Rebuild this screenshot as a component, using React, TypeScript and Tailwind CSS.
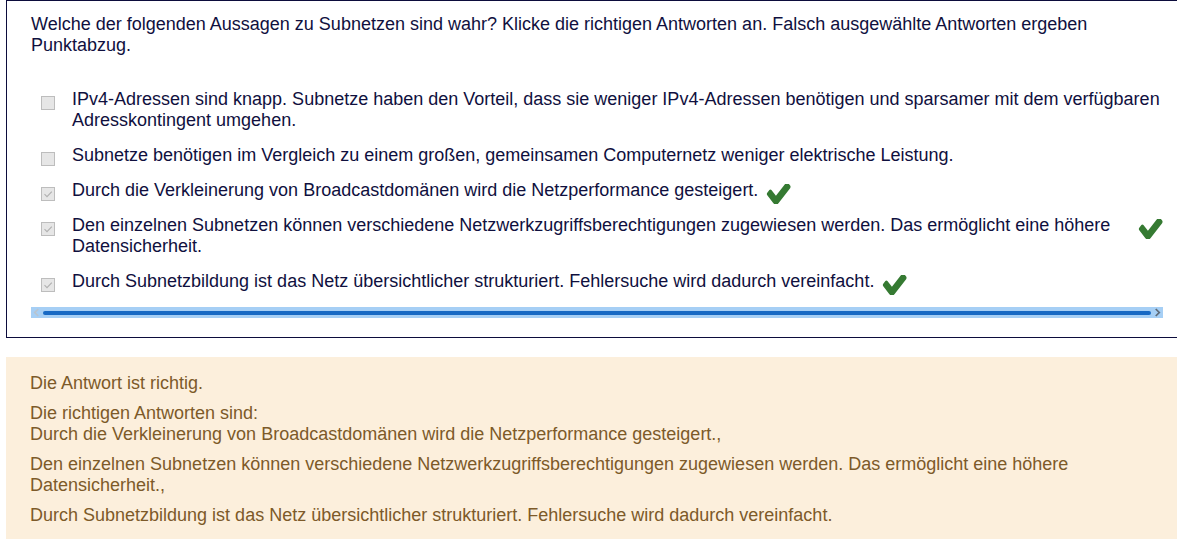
import React from "react";

const FONT = { fontFamily: '"Liberation Sans", Arial, sans-serif' };

function Check() {
  return (
    <svg viewBox="0 420 1700 1020" className="w-[26px] h-[20px] shrink-0 ml-[7px] mt-[4px] -mb-[4px]" preserveAspectRatio="none">
      <path
        fill="#357a32"
        d="M1671 566q0 40-28 68l-724 724-136 136q-28 28-68 28t-68-28l-136-136-362-362q-28-28-28-68t28-68l136-136q28-28 68-28t68 28l294 295 656-657q28-28 68-28t68 28l136 136q28 28 28 68z"
      />
    </svg>
  );
}

function Box({ checked }: { checked: boolean }) {
  return (
    <div className="w-[14px] h-[14px] shrink-0 mt-[7px] ml-[10px] bg-[#e6e6e6] border border-[#bdbdbd] flex items-center justify-center">
      {checked && (
        <svg viewBox="0 0 12 12" className="w-[12px] h-[12px]">
          <path d="M2.5 6.2 L5 8.6 L9.8 3.6" fill="none" stroke="#b0b0b0" strokeWidth="1.1" />
        </svg>
      )}
    </div>
  );
}

const options: { text: string; checked: boolean; correct: boolean }[] = [
  {
    text: "IPv4-Adressen sind knapp. Subnetze haben den Vorteil, dass sie weniger IPv4-Adressen benötigen und sparsamer mit dem verfügbaren Adresskontingent umgehen.",
    checked: false,
    correct: false,
  },
  {
    text: "Subnetze benötigen im Vergleich zu einem großen, gemeinsamen Computernetz weniger elektrische Leistung.",
    checked: false,
    correct: false,
  },
  {
    text: "Durch die Verkleinerung von Broadcastdomänen wird die Netzperformance gesteigert.",
    checked: true,
    correct: true,
  },
  {
    text: "Den einzelnen Subnetzen können verschiedene Netzwerkzugriffsberechtigungen zugewiesen werden. Das ermöglicht eine höhere Datensicherheit.",
    checked: true,
    correct: true,
  },
  {
    text: "Durch Subnetzbildung ist das Netz übersichtlicher strukturiert. Fehlersuche wird dadurch vereinfacht.",
    checked: true,
    correct: true,
  },
];

export default function App() {
  return (
    <div className="w-[1177px] h-[539px] overflow-hidden bg-white text-[18px] leading-[21px]" style={FONT}>
      <div className="ml-[6px] w-[1190px] border border-[#0c0c3c] pt-[13px] pb-[19px] pl-[24px] text-[#10103e]">
        <div className="w-[1132px]">
          <p className="w-[1100px]">
            Welche der folgenden Aussagen zu Subnetzen sind wahr? Klicke die richtigen Antworten an. Falsch ausgewählte Antworten ergeben
            Punktabzug.
          </p>
          <div className="mt-[33px] flex flex-col gap-[14px]">
            {options.map((o, i) => (
              <div key={i} className="flex items-start">
                <Box checked={o.checked} />
                <div className="ml-[17px] flex items-start flex-1 min-w-0">
                  <span>{o.text}</span>
                  {o.correct && <Check />}
                </div>
              </div>
            ))}
          </div>
          <div className="mt-[15px] h-[11px] bg-[#a6cff5] flex items-center px-[2px]">
            <svg viewBox="0 0 8 10" className="w-[7px] h-[9px] shrink-0">
              <path d="M6 1 L2 5 L6 9" fill="none" stroke="#b9c4cf" strokeWidth="2" />
            </svg>
            <div className="flex-1 mx-[3px] h-[4px] rounded-full bg-[#1769c4]" />
            <svg viewBox="0 0 8 10" className="w-[7px] h-[9px] shrink-0">
              <path d="M2 1 L6 5 L2 9" fill="none" stroke="#5f6b78" strokeWidth="2" />
            </svg>
          </div>
        </div>
      </div>
      <div className="mt-[19px] ml-[6px] w-[1190px] h-[300px] bg-[#fcefdc] text-[#7d5a29] pl-[24px] pt-[16px]">
        <p>Die Antwort ist richtig.</p>
        <div className="mt-[9px]">
          <p>Die richtigen Antworten sind:</p>
          <p>Durch die Verkleinerung von Broadcastdomänen wird die Netzperformance gesteigert.,</p>
          <p className="mt-[9px] w-[1100px]">
            Den einzelnen Subnetzen können verschiedene Netzwerkzugriffsberechtigungen zugewiesen werden. Das ermöglicht eine höhere
            <br />
            Datensicherheit.,
          </p>
          <p className="mt-[9px]">Durch Subnetzbildung ist das Netz übersichtlicher strukturiert. Fehlersuche wird dadurch vereinfacht.</p>
        </div>
      </div>
    </div>
  );
}
